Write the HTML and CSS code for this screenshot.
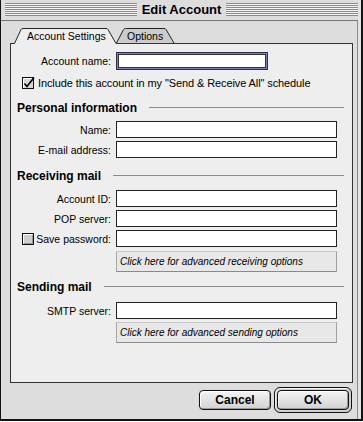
FILE: index.html
```html
<!DOCTYPE html>
<html lang="en">
<head>
    <meta charset="UTF-8">
    <meta name="viewport" content="width=device-width, initial-scale=1.0">
    <title>Edit Account</title>
    <link rel="stylesheet" href="styles.css">
</head>
<body>

    <div class="window">

        <!-- Barra del titolo -->
        <div class="titlebar">
            <span class="stripes"></span>
            <span class="title">Edit Account</span>
            <span class="stripes"></span>
        </div>

        <div class="dialog">

            <!-- Schede -->
            <div class="tabs">
                <span class="tab active">Account Settings</span>
                <span class="tab">Options</span>
            </div>

            <div class="panel">
                <div class="row first">
                    <span class="label">Account name:</span>
                    <span class="field focus"></span>
                </div>

                <div class="check-row">
                    <svg class="box" width="13" height="12" viewBox="0 0 13 12">
                        <rect x="0.5" y="0.5" width="11" height="11" fill="#d6d6d6" stroke="#111"/>
                        <path d="M1.5 10.5V1.5H10.5" fill="none" stroke="#fff"/>
                        <path d="M2.5 6.5L5 9.5L12 0.5" fill="none" stroke="#000" stroke-width="1.6"/>
                    </svg>
                    <span>Include this account in my "Send &amp; Receive All" schedule</span>
                </div>

                <!-- Informazioni personali -->
                <div class="section personal">
                    <span>Personal information</span>
                    <span class="rule"></span>
                </div>
                <div class="row name">
                    <span class="label">Name:</span>
                    <span class="field"></span>
                </div>
                <div class="row">
                    <span class="label">E-mail address:</span>
                    <span class="field"></span>
                </div>

                <!-- Ricezione -->
                <div class="section receiving">
                    <span>Receiving mail</span>
                    <span class="rule"></span>
                </div>
                <div class="row account-id">
                    <span class="label">Account ID:</span>
                    <span class="field"></span>
                </div>
                <div class="row">
                    <span class="label">POP server:</span>
                    <span class="field"></span>
                </div>
                <div class="row">
                    <span class="label">
                        <svg class="box save" width="13" height="12" viewBox="0 0 13 12">
                            <rect x="0.5" y="0.5" width="11" height="11" fill="#cfcfcf" stroke="#111"/>
                            <path d="M1.5 10.5V1.5H10.5" fill="none" stroke="#fff"/>
                            <path d="M2 10.5H10.5V2" fill="none" stroke="#999"/>
                        </svg>
                        <span>Save password:</span>
                    </span>
                    <span class="field"></span>
                </div>
                <div class="advanced receive">Click here for advanced receiving options</div>

                <!-- Invio -->
                <div class="section sending">
                    <span>Sending mail</span>
                    <span class="rule"></span>
                </div>
                <div class="row smtp">
                    <span class="label">SMTP server:</span>
                    <span class="field"></span>
                </div>
                <div class="advanced">Click here for advanced sending options</div>
            </div>

            <!-- Pulsanti -->
            <div class="actions">
                <span class="button">Cancel</span>
                <span class="default-ring"><span class="button">OK</span></span>
            </div>
        </div>
    </div>

</body>
</html>
```

FILE: styles.css
```css
body {
    margin: 0;
    background: #fff;
    font-family: "Liberation Sans", Arial, sans-serif;
    color: #000;
}

.window {
    width: 363px;
    height: 421px;
    box-sizing: border-box;
    border-left: 1px solid #111;
    border-right: 2px solid #111;
    border-bottom: 2px solid #111;
    padding-right: 3px;
    background: #e2e2e2;
    display: flex;
    flex-direction: column;
}

/* Barra del titolo a righe */
.titlebar {
    height: 20px;
    border-bottom: 1px solid #777;
    background: #dddddd;
    display: flex;
    gap: 5px;
    padding-left: 4px;
}
.stripes {
    flex: 1;
    height: 13px;
    margin-top: 3px;
    background: repeating-linear-gradient(to bottom, #8a8a8a 0 1px, #f4f4f4 1px 2px);
}
.title {
    font-weight: bold;
    font-size: 13px;
    line-height: 20px;
}

.dialog {
    flex: 1;
    background: #dddddd;
    border-right: 1px solid #8a8a8a;
    padding-top: 7px;
    display: flex;
    flex-direction: column;
}

/* Schede */
.tabs {
    display: flex;
    align-items: flex-start;
    margin-left: 11px;
    height: 16px;
    margin-bottom: -1px;
    position: relative;
    z-index: 1;
}
.tab {
    box-sizing: border-box;
    font-size: 10.5px;
    line-height: 16px;
    background-repeat: no-repeat;
    background-size: 100% 100%;
    width: 59px;
    height: 15px;
    margin-left: -1px;
    padding-left: 11px;
    background-image: url("data:image/svg+xml,<svg xmlns='http://www.w3.org/2000/svg' width='59' height='15' viewBox='0 0 59 15'><path d='M0.5 15L7.5 1.5Q8 0.5 9.5 0.5H48Q49.5 0.5 50 1.5L58 15Z' fill='%23cccccc'/><path d='M0.5 15L7.5 1.5Q8 0.5 9.5 0.5H48Q49.5 0.5 50 1.5L58 15' fill='none' stroke='%23222'/></svg>");
}
.tab.active {
    width: 105px;
    height: 16px;
    margin-left: 0;
    padding-left: 15px;
    background-image: url("data:image/svg+xml,<svg xmlns='http://www.w3.org/2000/svg' width='105' height='16' viewBox='0 0 105 16'><path d='M0 16V15H2.5L9 1.5Q9.5 0.5 11 0.5H94Q95.5 0.5 96 1.5L104.5 16Z' fill='%23eeeeee'/><path d='M0 15.5H2.5L9 1.5Q9.5 0.5 11 0.5H94Q95.5 0.5 96 1.5L104 15.5' fill='none' stroke='%23222'/></svg>");
}

/* Pannello della scheda */
.panel {
    margin: 0 4px 0 9px;
    height: 340px;
    box-sizing: border-box;
    border: 1px solid #333;
    background: #eeeeee;
    padding: 0 8px 0 6px;
    font-size: 11px;
    letter-spacing: -0.1px;
}

.row {
    display: flex;
    align-items: center;
    margin-top: 3px;
}
.row.first { margin-top: 8px; }
.row.name { margin-top: 6px; }
.row.account-id { margin-top: 7px; }
.row.smtp { margin-top: 8px; }

.label {
    width: 94px;
    margin-right: 5px;
    display: flex;
    justify-content: flex-end;
    align-items: center;
    white-space: nowrap;
    font-size: 10.5px;
    letter-spacing: 0;
}
.label .save {
    margin-left: 5px;
    margin-right: auto;
}

.field {
    width: 221px;
    height: 17px;
    box-sizing: border-box;
    background: #fff;
    border: 1px solid #222;
}
.field.focus {
    width: 152px;
    height: 18px;
    border: 1px solid #2e2e50;
    box-shadow: inset 0 0 0 1px #8080b8, inset 0 0 0 2px #333;
}

.check-row {
    display: flex;
    align-items: center;
    gap: 3px;
    padding-left: 5px;
    margin-top: 7px;
    height: 12px;
    white-space: nowrap;
}
.box { display: block; flex: none; }

/* Intestazioni di sezione */
.section {
    display: flex;
    align-items: center;
    gap: 12px;
    height: 15px;
    font-weight: bold;
    font-size: 12px;
    letter-spacing: 0;
}
.section.personal { margin-top: 11px; }
.section.receiving { margin-top: 10px; }
.section.sending { margin-top: 7px; }
.rule {
    flex: 1;
    height: 1px;
    background: #8c8c8c;
}

.advanced {
    margin: 3px 0 0 99px;
    width: 221px;
    height: 21px;
    box-sizing: border-box;
    border: 1px solid;
    border-color: #c8c8c8 #a0a0a0 #8a8a8a #a8a8a8;
    background: #e8e8e8;
    font-style: italic;
    font-size: 10px;
    letter-spacing: 0;
    padding-left: 3px;
    display: flex;
    align-items: center;
}
.advanced.receive { margin-top: 4px; }

/* Pulsanti in basso */
.actions {
    display: flex;
    justify-content: flex-end;
    align-items: center;
    gap: 3px;
    margin-top: 4px;
    padding-right: 5px;
}
.button {
    width: 72px;
    height: 20px;
    box-sizing: border-box;
    border: 1px solid #111;
    border-radius: 4px;
    background: linear-gradient(#f4f4f4, #d2d2d2);
    box-shadow: inset 1px 1px #fff, inset -1px -1px #9a9a9a;
    font-weight: bold;
    font-size: 12px;
    display: flex;
    align-items: center;
    justify-content: center;
}
.default-ring {
    display: flex;
    padding: 2px;
    border: 1px solid #111;
    border-radius: 6px;
    background: #d0d0d0;
    box-shadow: inset 1px 1px #f2f2f2;
}
```
